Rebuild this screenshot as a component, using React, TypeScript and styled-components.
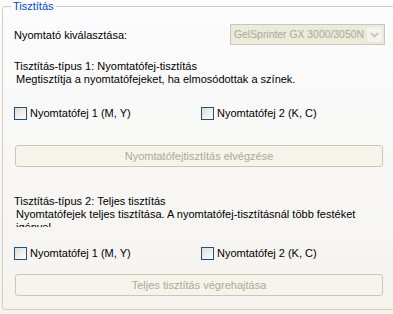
import styled, { createGlobalStyle } from "styled-components";

const GlobalStyle = createGlobalStyle`
  html, body {
    margin: 0;
    padding: 0;
    overflow: hidden;
    background: #f3f2ec;
  }
  body {
    font-family: "Liberation Sans", Arial, sans-serif;
    font-size: 11px;
    color: #000;
  }
`;

const Page = styled.div`
  width: 393px;
  height: 314px;
  overflow: hidden;
  background: linear-gradient(#fcfcfe, #f4f3ee);
  padding: 0 0 0 2px;
  box-sizing: border-box;
`;

const GroupBox = styled.fieldset`
  margin: 0;
  width: 420px;
  height: 310px;
  box-sizing: border-box;
  border: 1px solid #d0d0bf;
  border-radius: 3px;
  padding: 0 0 0 11px;
  display: flex;
  flex-direction: column;
`;

const Legend = styled.legend`
  color: #0046d5;
  padding: 0 2px;
  margin-left: -3px;
  line-height: 13px;
`;

const PrinterRow = styled.div`
  display: flex;
  align-items: center;
  height: 21px;
  margin-top: 11px;
  width: 371px;
`;

const RowLabel = styled.span`
  flex: 1;
`;

const Select = styled.div`
  width: 155px;
  height: 21px;
  box-sizing: border-box;
  border: 1px solid #c9c7ba;
  background: #ebeadb;
  display: flex;
  align-items: center;
  padding-left: 3px;
  color: #aca899;
`;

const SelectText = styled.span`
  flex: 1;
  white-space: nowrap;
  font-size: 10.4px;
`;

const SelectArrow = styled.span`
  width: 17px;
  height: 17px;
  flex: none;
  margin-right: 1px;
  box-sizing: border-box;
  border: 1px solid #e8e6dd;
  border-radius: 2px;
  background: #f4f3ee;
  display: flex;
  align-items: center;
  justify-content: center;
`;

const Title = styled.div<{ $gap: number }>`
  margin-top: ${(p) => p.$gap}px;
  line-height: 13px;
  white-space: nowrap;
`;

const Description = styled.div<{ $height: number }>`
  line-height: 13px;
  height: ${(p) => p.$height}px;
  overflow: hidden;
  width: 360px;
  padding-left: 2px;
`;

const CheckRow = styled.div<{ $gap: number }>`
  display: grid;
  grid-template-columns: 187px auto;
  margin-top: ${(p) => p.$gap}px;
  height: 13px;
`;

const CheckLabel = styled.label`
  display: flex;
  align-items: center;
  gap: 3px;
  line-height: 13px;
`;

const Box = styled.span`
  width: 13px;
  height: 13px;
  box-sizing: border-box;
  border: 1px solid #1c5180;
  background: linear-gradient(135deg, #dcdcd7, #fff);
`;

const Button = styled.button<{ $gap: number }>`
  margin-top: ${(p) => p.$gap}px;
  width: 368px;
  height: 22px;
  margin-left: 1px;
  border: 1px solid #c9c7ba;
  border-radius: 3px;
  background: #f5f4ea;
  color: #aca899;
  font: inherit;
  padding: 0;
`;

function Check({ label }: { label: string }) {
  return (
    <CheckLabel>
      <Box />
      {label}
    </CheckLabel>
  );
}

export default function App() {
  return (
    <>
      <GlobalStyle />
      <Page>
        <GroupBox>
          <Legend>Tisztítás</Legend>
          <PrinterRow>
            <RowLabel>Nyomtató kiválasztása:</RowLabel>
            <Select>
              <SelectText>GelSprinter GX 3000/3050N</SelectText>
              <SelectArrow>
                <svg width="9" height="6" viewBox="0 0 9 6">
                  <path d="M1 1l3.5 3.5L8 1" fill="none" stroke="#c2c0b4" strokeWidth="1.6" />
                </svg>
              </SelectArrow>
            </Select>
          </PrinterRow>

          <Title $gap={15}>Tisztítás-típus 1: Nyomtatófej-tisztítás</Title>
          <Description $height={13}>
            Megtisztítja a nyomtatófejeket, ha elmosódottak a színek.
          </Description>
          <CheckRow $gap={21}>
            <Check label="Nyomtatófej 1 (M, Y)" />
            <Check label="Nyomtatófej 2 (K, C)" />
          </CheckRow>
          <Button $gap={25} disabled>
            Nyomtatófejtisztítás elvégzése
          </Button>

          <Title $gap={28}>Tisztítás-típus 2: Teljes tisztítás</Title>
          <Description $height={19}>
            Nyomtatófejek teljes tisztítása. A nyomtatófej-tisztításnál több
            festéket igényel
          </Description>
          <CheckRow $gap={20}>
            <Check label="Nyomtatófej 1 (M, Y)" />
            <Check label="Nyomtatófej 2 (K, C)" />
          </CheckRow>
          <Button $gap={14} disabled>
            Teljes tisztítás végrehajtása
          </Button>
        </GroupBox>
      </Page>
    </>
  );
}
